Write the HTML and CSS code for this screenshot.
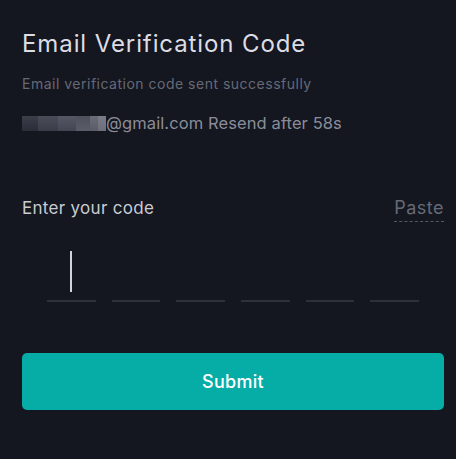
FILE: index.html
```html
<!DOCTYPE html>
<html>
<head>
<meta charset="utf-8">
<link rel="stylesheet" href="styles.css">
</head>
<body>
<div class="page">
  <h1 class="title">Email Verification Code</h1>
  <p class="sub">Email verification code sent successfully</p>
  <p class="email"><span class="masked"><i class="m1"></i><i class="m2"></i><i class="m3"></i><i class="m4"></i><i class="m5"></i><i class="m6"></i></span>@gmail.com Resend after 58s</p>
  <div class="label-row">
    <span class="label">Enter your code</span>
    <span class="paste">Paste</span>
  </div>
  <div class="code">
    <div class="cell active"><span class="cursor"></span></div>
    <div class="cell"></div>
    <div class="cell"></div>
    <div class="cell"></div>
    <div class="cell"></div>
    <div class="cell"></div>
  </div>
  <button class="submit">Submit</button>
</div>
</body>
</html>
```
FILE: styles.css
```css
* { box-sizing: border-box; }
html, body { margin: 0; padding: 0; background: #141620; }
body { font-family: Inter, Roboto, sans-serif; width: 456px; height: 459px; overflow: hidden; }
.page { padding: 28px 12px 0 22px; display: flex; flex-direction: column; }
.title { margin: 0; font-size: 24px; font-weight: 400; color: #dcdde3; line-height: 32px; letter-spacing: 0.9px; }
.sub { margin: 14px 0 0; font-size: 14px; color: #666a76; line-height: 20px; letter-spacing: 0.5px; }
.email { margin: 18px 0 0; font-size: 16.5px; color: #8a8d98; line-height: 22px; letter-spacing: 0.1px; display: flex; align-items: center; }
.masked { display: inline-flex; height: 15px; margin-right: 0; }
.masked i { display: block; height: 15px; }
.m1 { width: 16px; background: linear-gradient(#3c3f4a, #2a2d38); }
.m2 { width: 20px; background: linear-gradient(#4a4d58, #3a3d48); }
.m3 { width: 18px; background: linear-gradient(#555864, #434652); }
.m4 { width: 14px; background: linear-gradient(#4e515c, #5a5d68); }
.m5 { width: 8px; background: linear-gradient(#6a6d78, #5a5d68); }
.m6 { width: 8px; background: linear-gradient(#7a7d88, #6c6f7a); }
.label-row { margin-top: 63px; display: flex; justify-content: space-between; align-items: flex-start; }
.label { font-size: 17px; color: #c9cbd1; line-height: 22px; letter-spacing: 0.3px; }
.paste { font-size: 18px; color: #666a76; line-height: 22px; letter-spacing: 0.5px; padding-bottom: 2px; border-bottom: 1px dashed #555864; }
.code { margin-top: 29px; padding: 0 25px; display: flex; gap: 16px; }
.cell { width: 49px; height: 51px; border-bottom: 2px solid #2e313b; display: flex; justify-content: center; align-items: flex-start; }
.cursor { display: block; width: 2px; height: 41px; margin-top: 0; background: #d2d4da; }
.submit { margin-top: 51px; width: 422px; height: 57px; border: 0; border-radius: 5px; background: #06aca6; color: #ffffff; font-family: Inter, Roboto, sans-serif; font-size: 18px; font-weight: 500; letter-spacing: 0.3px; padding: 0; }
```
